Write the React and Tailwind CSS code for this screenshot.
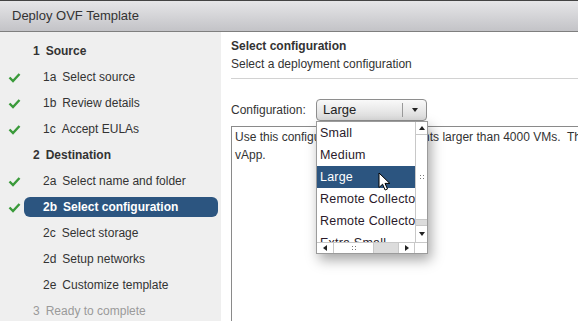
import React from 'react';

const steps = [
  { label: '1', text: 'Source', head: true },
  { label: '1a', text: 'Select source', done: true },
  { label: '1b', text: 'Review details', done: true },
  { label: '1c', text: 'Accept EULAs', done: true },
  { label: '2', text: 'Destination', head: true },
  { label: '2a', text: 'Select name and folder', done: true },
  { label: '2b', text: 'Select configuration', done: true, active: true },
  { label: '2c', text: 'Select storage' },
  { label: '2d', text: 'Setup networks' },
  { label: '2e', text: 'Customize template' },
  { label: '3', text: 'Ready to complete', head: true, muted: true },
];

const options = ['Small', 'Medium', 'Large', 'Remote Collector', 'Remote Collector', 'Extra Small'];

function Check() {
  return (
    <svg width="13" height="11" viewBox="0 0 13 11">
      <path d="M1.5 5.5 L5 9 L11.5 2" fill="none" stroke="#3a9a3a" strokeWidth="2.4" />
    </svg>
  );
}

function Grip() {
  return (
    <span className="grid grid-cols-2 gap-[2px]">
      <span className="w-[1px] h-[1px] bg-[#777]" />
      <span className="w-[1px] h-[1px] bg-[#777]" />
      <span className="w-[1px] h-[1px] bg-[#777]" />
      <span className="w-[1px] h-[1px] bg-[#777]" />
    </span>
  );
}

function Tri({ dir }) {
  const d = {
    up: 'M0 4 L3 0 L6 4 Z',
    down: 'M0 0 L6 0 L3 4 Z',
    left: 'M4 0 L4 6 L0 3 Z',
    right: 'M0 0 L4 3 L0 6 Z',
  }[dir];
  const vert = dir === 'up' || dir === 'down';
  return (
    <svg width={vert ? 6 : 4} height={vert ? 4 : 6} viewBox={vert ? '0 0 6 4' : '0 0 4 6'}>
      <path d={d} fill="#222" />
    </svg>
  );
}

function StepRow({ s }) {
  if (s.head) {
    return (
      <div className={`h-[26px] flex items-center pl-[33px] ${s.muted ? 'text-[#9a9a9a]' : 'font-bold text-[#333]'}`}>
        <span className="mr-[6px]">{s.label}</span>
        <span>{s.text}</span>
      </div>
    );
  }
  return (
    <div className="h-[26px] flex items-center">
      <div className="w-[24px] pl-[8px] flex items-center">{s.done && <Check />}</div>
      <div
        className={`w-[194px] h-[20px] flex items-center pl-[19px] rounded-[6px] ${
          s.active ? 'bg-[#2c5580] text-white font-bold' : 'text-[#333]'
        }`}
      >
        <span className="mr-[6px]">{s.label}</span>
        <span>{s.text}</span>
      </div>
    </div>
  );
}

// mouse pointer hovering over the highlighted option
function Cursor() {
  return (
    <svg className="absolute left-[61px] top-[50px]" width="14" height="21" viewBox="0 0 14 21">
      <path
        d="M1 1 L1 15.5 L4.6 12.2 L7.1 18 L9.5 17 L7 11.4 L11.8 11.4 Z"
        fill="white"
        stroke="black"
        strokeWidth="1"
        strokeLinejoin="round"
      />
    </svg>
  );
}

export default function App() {
  return (
    <div className="w-[578px] h-[321px] overflow-hidden bg-white font-['Liberation_Sans',Arial,sans-serif] text-[12px] text-[#333] flex flex-col">
      <div className="h-[32px] shrink-0 flex items-center pl-[12px] border-t border-[#444] border-b border-b-[#7f7f7f] bg-gradient-to-b from-[#e6e6e8] to-[#c3c3c7] text-[13px] text-[#333]">
        Deploy OVF Template
      </div>
      <div className="flex flex-1 min-h-0">
        <div className="w-[221px] shrink-0 bg-[#efefef] pt-[6px]">
          {steps.map((s, i) => (
            <StepRow key={i} s={s} />
          ))}
        </div>
        <div className="flex-1 pl-[10px] pt-[5px] flex flex-col">
          <div className="font-bold leading-[18px]">Select configuration</div>
          <div className="leading-[18px]">Select a deployment configuration</div>
          <div className="mt-[5px] h-px bg-[#d2d2d2]" />
          <div className="mt-[20px] flex items-center">
            <span className="w-[85px]">Configuration:</span>
            <div className="relative z-10">
              <div className="w-[111px] h-[22px] rounded-[4px] border border-[#8e8e8e] bg-gradient-to-b from-[#f9f9f9] to-[#dadada] flex items-center">
                <span className="flex-1 pl-[6px] text-[13px] text-[#222]">Large</span>
                <span className="w-px h-[14px] bg-[#9a9a9a]" />
                <span className="w-[23px] flex items-center justify-center">
                  <Tri dir="down" />
                </span>
              </div>
              <div className="absolute left-0 top-[22px] w-[112px] h-[133px] bg-white border border-[#9b9b9b] shadow-[3px_6px_12px_rgba(0,0,0,0.35)] flex flex-col">
                <div className="flex flex-1 min-h-0">
                  <div className="w-[98px] overflow-hidden">
                    {options.map((o, i) => (
                      <div
                        key={i}
                        className={`h-[22px] flex items-center pl-[3px] whitespace-nowrap text-[12.5px] tracking-[0.2px] ${
                          i === 2 ? 'bg-[#2c5580] text-white' : 'text-[#2a1a2a]'
                        }`}
                      >
                        {o}
                      </div>
                    ))}
                  </div>
                  <div className="w-[12px] border-l border-[#c8c8c8] flex flex-col">
                    <div className="h-[12px] flex items-center justify-center">
                      <Tri dir="up" />
                    </div>
                    <div className="flex-1 border-y border-[#c8c8c8] flex items-center justify-center">
                      <Grip />
                    </div>
                    <div className="h-[5px] bg-[#dcdcdc]" />
                    <div className="h-[17px] border-t border-[#c8c8c8] flex items-center justify-center">
                      <Tri dir="down" />
                    </div>
                  </div>
                </div>
                <div className="h-[11px] border-t border-[#c8c8c8] flex">
                  <div className="w-[17px] flex items-center justify-center border-r border-[#c8c8c8]">
                    <Tri dir="left" />
                  </div>
                  <div className="w-[40px] flex items-center justify-center border-r border-[#c8c8c8]">
                    <Grip />
                  </div>
                  <div className="w-[24px] bg-[#dcdcdc]" />
                  <div className="w-[17px] flex items-center justify-center border-x border-[#c8c8c8]">
                    <Tri dir="right" />
                  </div>
                  <div className="flex-1" />
                </div>
                <Cursor />
              </div>
            </div>
          </div>
          <div className="mt-[5px] flex-1 w-[420px] border-l border-t border-[#8a8a8a] pl-[3px] pt-px leading-[18px] text-[#333] whitespace-pre">
            <div>Use this configuration for deployments larger than 4000 VMs.  This configuration deploys a large</div>
            <div>vApp.</div>
          </div>
        </div>
      </div>
    </div>
  );
}
